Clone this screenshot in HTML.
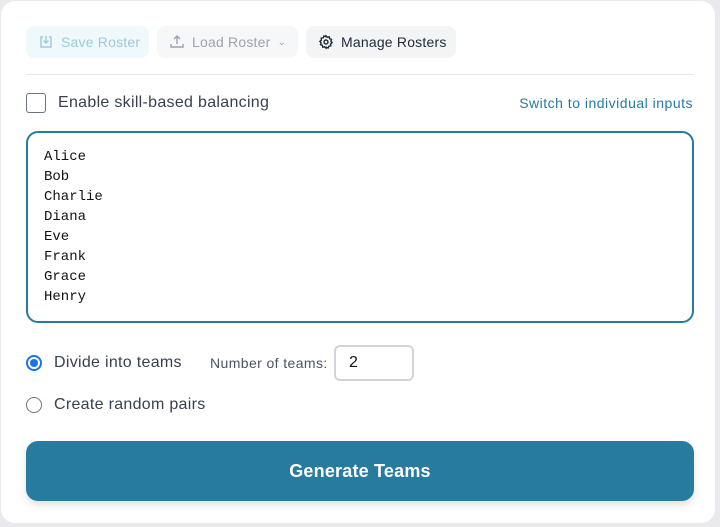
<!DOCTYPE html>
<html><head><style>
*{box-sizing:border-box;margin:0;padding:0}
body{width:720px;height:527px;background:#e9eaed;font-family:"Liberation Sans",sans-serif;position:relative;overflow:hidden}
.card{position:absolute;left:1px;top:1px;width:714px;height:522px;background:#fff;border-radius:14px}
.btn{position:absolute;top:26px;height:32px;border-radius:8px;font-size:14px;display:flex;align-items:center;padding-left:12px;letter-spacing:0.2px}
.btn svg{margin-right:7px}
.line{position:absolute;left:26px;top:74px;width:668px;height:1px;background:#e5e7eb}
.cb{position:absolute;left:26px;top:93px;width:20px;height:20px;border:1.5px solid #6b7280;border-radius:3px}
.t{position:absolute;color:#374151;font-size:16px;letter-spacing:0.3px;white-space:nowrap}
.ta{position:absolute;left:26px;top:131px;width:668px;height:192px;border:2px solid #267b9f;border-radius:12px;padding:14px 16px;font-family:"Liberation Mono",monospace;font-size:14px;line-height:20px;color:#111}
.num{position:absolute;left:334px;top:345px;width:80px;height:36px;border:2px solid #d1d5db;border-radius:6px;padding-left:13px;line-height:32px;font-size:16px;color:#111}
.gen{position:absolute;left:26px;top:441px;width:668px;height:60px;background:#267b9f;border-radius:12px;color:#fff;font-weight:bold;font-size:18px;text-align:center;line-height:60px;box-shadow:0 4px 8px rgba(0,0,0,.12);letter-spacing:0.2px}
</style></head><body>
<div class="card"></div>
<div class="btn" style="left:26px;width:123px;background:#eff8fa;color:#9ccbdc">
<svg width="16" height="16" viewBox="0 0 16 16" fill="none" stroke="#9ccbdc" stroke-width="1.4"><path d="M5 3H3v10h10V3h-2"/><path d="M8 2v7M5.5 6.5L8 9l2.5-2.5"/></svg>Save Roster</div>
<div class="btn" style="left:157px;width:141px;background:#f6f7f9;color:#9ca3af">
<svg width="16" height="16" viewBox="0 0 16 16" fill="none" stroke="#9ca3af" stroke-width="1.4"><path d="M2 10v3h12v-3"/><path d="M8 10V2M5 5l3-3 3 3"/></svg>Load Roster<span style="margin-left:7px;font-size:10px">&#8964;</span></div>
<div class="btn" style="left:306px;width:150px;background:#f3f4f6;color:#1f2937">
<svg width="16" height="16" viewBox="0 0 16 16" fill="none" stroke="#1f2937" stroke-width="1.4"><circle cx="8" cy="8" r="2"/><path d="M8 1.8l1.3 1.4 1.9-.4.5 1.9 1.8.7-.6 1.8 1.2 1.5-1.5 1.2.2 1.9-1.9.4-.8 1.8-1.8-.7L8 14.2l-1.3-1.4-1.9.4-.5-1.9-1.8-.7.6-1.8L1.9 7.3l1.5-1.2-.2-1.9 1.9-.4.8-1.8 1.8.7z"/></svg>Manage Rosters</div>
<div class="line"></div>
<div class="cb"></div>
<div class="t" style="left:58px;top:94px">Enable skill-based balancing</div>
<div class="t" style="right:27px;top:95px;font-size:14px;color:#267b9f;letter-spacing:0.5px">Switch to individual inputs</div>
<div class="ta">Alice<br>Bob<br>Charlie<br>Diana<br>Eve<br>Frank<br>Grace<br>Henry</div>
<div style="position:absolute;left:26px;top:355px;width:16px;height:16px;border-radius:50%;border:2px solid #1a73e8;background:#fff"><div style="position:absolute;left:2px;top:2px;width:8px;height:8px;border-radius:50%;background:#1a73e8"></div></div>
<div class="t" style="left:54px;top:354px">Divide into teams</div>
<div class="t" style="left:210px;top:355px;font-size:14px;color:#4b5563;letter-spacing:0.4px">Number of teams:</div>
<div class="num">2</div>
<div style="position:absolute;left:26px;top:397px;width:16px;height:16px;border-radius:50%;border:1px solid #6b7280"></div>
<div class="t" style="left:54px;top:396px">Create random pairs</div>
<div class="gen">Generate Teams</div>
</body></html>
